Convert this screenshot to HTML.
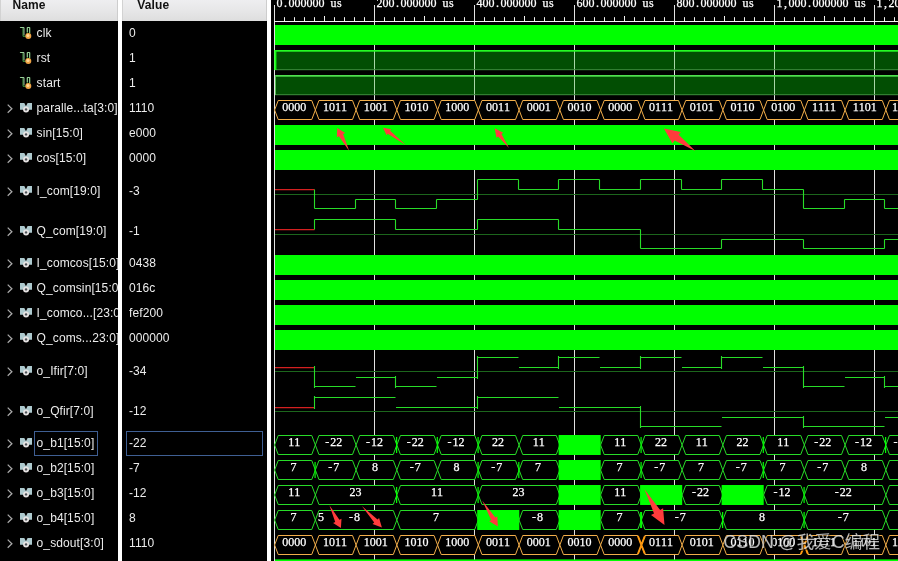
<!DOCTYPE html>
<html><head><meta charset="utf-8"><title>wave</title>
<style>
html,body{margin:0;padding:0;background:#000;}
body{width:898px;height:561px;position:relative;overflow:hidden;font-family:"Liberation Sans",sans-serif;font-size:12px;color:#ececec;letter-spacing:.1px;}
#np{position:absolute;left:0;top:0;width:118px;height:561px;overflow:hidden;will-change:transform;}
#vp{position:absolute;left:122px;top:0;width:145px;height:561px;overflow:hidden;will-change:transform;}
.sep{position:absolute;top:0;height:561px;width:4px;background:#fff;}
.hd{position:absolute;left:0;top:0;right:0;height:20.7px;background:linear-gradient(#eeeef0,#e7e7e8 50%,#dedede);color:#111;font-weight:bold;line-height:13px;}
.hd{box-sizing:border-box;border-left:1px solid #d2d2d2;border-right:1px solid #cdcdcd;}
.hd span{position:absolute;top:-1.2px;}
.nm{position:absolute;left:36.6px;white-space:nowrap;margin-top:1px;}
.vl{position:absolute;left:7px;white-space:nowrap;margin-top:1px;}
.ic{position:absolute;}
.selbox{position:absolute;border:1px solid #3f5f93;box-sizing:border-box;}
#wv{position:absolute;left:0;top:0;will-change:transform;}
.grid{stroke:#e2e2e2;stroke-width:1;}
.rul{stroke:#f4f4f4;stroke-width:1;}
.m{font-family:"Liberation Serif",serif;font-size:12px;fill:#fff;text-anchor:middle;stroke:#fff;stroke-width:.25px;}
.wm{font-family:"Liberation Sans","Noto Sans CJK SC",sans-serif;font-size:17.5px;fill:#e2e2e2;fill-opacity:.8;filter:drop-shadow(1px 1px 0.4px rgba(0,0,0,.75));}
</style></head><body>
<svg width="0" height="0" style="position:absolute"><defs>
<symbol id="chev" viewBox="0 0 28 14" width="28" height="14"><path d="M1.7 3.6 L5.9 7.7 L1.7 11.8" fill="none" stroke="#a9a9a9" stroke-width="1.25"/></symbol>
<symbol id="busic" viewBox="0 0 28 14" width="28" height="14">
<path d="M14 2 H18.3 L19.95 5.2 L21.6 2 H26 V8.8 H14 Z" fill="#adc9ce"/>
<circle cx="20.05" cy="8.4" r="3" fill="#e6e2e2"/><circle cx="20.05" cy="8.4" r="1.2" fill="#4a5056"/></symbol>
<symbol id="sigic" viewBox="0 0 28 14" width="28" height="14">
<path d="M13.9 1.5 H17 V10.3 H21.3 V1.5 H23.7 V8" fill="none" stroke="#3f9a3f" stroke-width="1"/>
<path d="M14.2 1.5 H18 V9.3 M21.3 6 V1.5 H23.7 V7" fill="none" stroke="#a9d6a9" stroke-width=".9"/>
<circle cx="22.3" cy="9.9" r="3" fill="#eea244"/><circle cx="22" cy="9.5" r="1.5" fill="#ffd596"/></symbol>
</defs></svg>
<svg id="wv" width="898" height="561" viewBox="0 0 898 561">
<line x1="274.5" y1="5" x2="274.5" y2="561" class="grid"/>
<line x1="374.5" y1="5" x2="374.5" y2="561" class="grid"/>
<line x1="474.5" y1="5" x2="474.5" y2="561" class="grid"/>
<line x1="574.5" y1="5" x2="574.5" y2="561" class="grid"/>
<line x1="674.5" y1="5" x2="674.5" y2="561" class="grid"/>
<line x1="774.5" y1="5" x2="774.5" y2="561" class="grid"/>
<line x1="874.5" y1="5" x2="874.5" y2="561" class="grid"/>
<line x1="274" y1="21.5" x2="898" y2="21.5" class="rul"/>
<line x1="284.5" y1="17.2" x2="284.5" y2="21" class="rul"/>
<line x1="294.5" y1="17.2" x2="294.5" y2="21" class="rul"/>
<line x1="304.5" y1="17.2" x2="304.5" y2="21" class="rul"/>
<line x1="314.5" y1="17.2" x2="314.5" y2="21" class="rul"/>
<line x1="324.5" y1="16.0" x2="324.5" y2="21" class="rul"/>
<line x1="334.5" y1="17.2" x2="334.5" y2="21" class="rul"/>
<line x1="344.5" y1="17.2" x2="344.5" y2="21" class="rul"/>
<line x1="354.5" y1="17.2" x2="354.5" y2="21" class="rul"/>
<line x1="364.5" y1="17.2" x2="364.5" y2="21" class="rul"/>
<line x1="384.5" y1="17.2" x2="384.5" y2="21" class="rul"/>
<line x1="394.5" y1="17.2" x2="394.5" y2="21" class="rul"/>
<line x1="404.5" y1="17.2" x2="404.5" y2="21" class="rul"/>
<line x1="414.5" y1="17.2" x2="414.5" y2="21" class="rul"/>
<line x1="424.5" y1="16.0" x2="424.5" y2="21" class="rul"/>
<line x1="434.5" y1="17.2" x2="434.5" y2="21" class="rul"/>
<line x1="444.5" y1="17.2" x2="444.5" y2="21" class="rul"/>
<line x1="454.5" y1="17.2" x2="454.5" y2="21" class="rul"/>
<line x1="464.5" y1="17.2" x2="464.5" y2="21" class="rul"/>
<line x1="484.5" y1="17.2" x2="484.5" y2="21" class="rul"/>
<line x1="494.5" y1="17.2" x2="494.5" y2="21" class="rul"/>
<line x1="504.5" y1="17.2" x2="504.5" y2="21" class="rul"/>
<line x1="514.5" y1="17.2" x2="514.5" y2="21" class="rul"/>
<line x1="524.5" y1="16.0" x2="524.5" y2="21" class="rul"/>
<line x1="534.5" y1="17.2" x2="534.5" y2="21" class="rul"/>
<line x1="544.5" y1="17.2" x2="544.5" y2="21" class="rul"/>
<line x1="554.5" y1="17.2" x2="554.5" y2="21" class="rul"/>
<line x1="564.5" y1="17.2" x2="564.5" y2="21" class="rul"/>
<line x1="584.5" y1="17.2" x2="584.5" y2="21" class="rul"/>
<line x1="594.5" y1="17.2" x2="594.5" y2="21" class="rul"/>
<line x1="604.5" y1="17.2" x2="604.5" y2="21" class="rul"/>
<line x1="614.5" y1="17.2" x2="614.5" y2="21" class="rul"/>
<line x1="624.5" y1="16.0" x2="624.5" y2="21" class="rul"/>
<line x1="634.5" y1="17.2" x2="634.5" y2="21" class="rul"/>
<line x1="644.5" y1="17.2" x2="644.5" y2="21" class="rul"/>
<line x1="654.5" y1="17.2" x2="654.5" y2="21" class="rul"/>
<line x1="664.5" y1="17.2" x2="664.5" y2="21" class="rul"/>
<line x1="684.5" y1="17.2" x2="684.5" y2="21" class="rul"/>
<line x1="694.5" y1="17.2" x2="694.5" y2="21" class="rul"/>
<line x1="704.5" y1="17.2" x2="704.5" y2="21" class="rul"/>
<line x1="714.5" y1="17.2" x2="714.5" y2="21" class="rul"/>
<line x1="724.5" y1="16.0" x2="724.5" y2="21" class="rul"/>
<line x1="734.5" y1="17.2" x2="734.5" y2="21" class="rul"/>
<line x1="744.5" y1="17.2" x2="744.5" y2="21" class="rul"/>
<line x1="754.5" y1="17.2" x2="754.5" y2="21" class="rul"/>
<line x1="764.5" y1="17.2" x2="764.5" y2="21" class="rul"/>
<line x1="784.5" y1="17.2" x2="784.5" y2="21" class="rul"/>
<line x1="794.5" y1="17.2" x2="794.5" y2="21" class="rul"/>
<line x1="804.5" y1="17.2" x2="804.5" y2="21" class="rul"/>
<line x1="814.5" y1="17.2" x2="814.5" y2="21" class="rul"/>
<line x1="824.5" y1="16.0" x2="824.5" y2="21" class="rul"/>
<line x1="834.5" y1="17.2" x2="834.5" y2="21" class="rul"/>
<line x1="844.5" y1="17.2" x2="844.5" y2="21" class="rul"/>
<line x1="854.5" y1="17.2" x2="854.5" y2="21" class="rul"/>
<line x1="864.5" y1="17.2" x2="864.5" y2="21" class="rul"/>
<line x1="884.5" y1="17.2" x2="884.5" y2="21" class="rul"/>
<line x1="894.5" y1="17.2" x2="894.5" y2="21" class="rul"/>
<text class="m" x="279.5 285.5 291.5 297.5 303.5 309.5 315.5 321.5 327.5 333.5 339.5" y="6.8">0.000000 us</text>
<text class="m" x="379.5 385.5 391.5 397.5 403.5 409.5 415.5 421.5 427.5 433.5 439.5 445.5 451.5" y="6.8">200.000000 us</text>
<text class="m" x="479.5 485.5 491.5 497.5 503.5 509.5 515.5 521.5 527.5 533.5 539.5 545.5 551.5" y="6.8">400.000000 us</text>
<text class="m" x="579.5 585.5 591.5 597.5 603.5 609.5 615.5 621.5 627.5 633.5 639.5 645.5 651.5" y="6.8">600.000000 us</text>
<text class="m" x="679.5 685.5 691.5 697.5 703.5 709.5 715.5 721.5 727.5 733.5 739.5 745.5 751.5" y="6.8">800.000000 us</text>
<text class="m" x="779.5 785.5 791.5 797.5 803.5 809.5 815.5 821.5 827.5 833.5 839.5 845.5 851.5 857.5 863.5" y="6.8">1,000.000000 us</text>
<text class="m" x="879.5 885.5 891.5 897.5 903.5 909.5 915.5 921.5 927.5 933.5 939.5 945.5 951.5 957.5 963.5" y="6.8">1,200.000000 us</text>
<rect x="275.0" y="25.0" width="623.0" height="20" fill="#00ff00"/>
<rect x="275" y="50" width="623" height="20" fill="#024e03"/>
<line x1="374.5" y1="51" x2="374.5" y2="70" stroke="#a8d6a8" stroke-width="1"/>
<line x1="474.5" y1="51" x2="474.5" y2="70" stroke="#a8d6a8" stroke-width="1"/>
<line x1="574.5" y1="51" x2="574.5" y2="70" stroke="#a8d6a8" stroke-width="1"/>
<line x1="674.5" y1="51" x2="674.5" y2="70" stroke="#a8d6a8" stroke-width="1"/>
<line x1="774.5" y1="51" x2="774.5" y2="70" stroke="#a8d6a8" stroke-width="1"/>
<line x1="874.5" y1="51" x2="874.5" y2="70" stroke="#a8d6a8" stroke-width="1"/>
<rect x="275" y="50.0" width="623" height="1.7" fill="#25fa25"/>
<rect x="275" y="69.2" width="623" height="1" fill="#3d8a3d"/>
<rect x="274.3" y="50" width="2.1" height="20" fill="#10ff10"/>
<rect x="275" y="75" width="623" height="20" fill="#024e03"/>
<line x1="374.5" y1="76" x2="374.5" y2="95" stroke="#a8d6a8" stroke-width="1"/>
<line x1="474.5" y1="76" x2="474.5" y2="95" stroke="#a8d6a8" stroke-width="1"/>
<line x1="574.5" y1="76" x2="574.5" y2="95" stroke="#a8d6a8" stroke-width="1"/>
<line x1="674.5" y1="76" x2="674.5" y2="95" stroke="#a8d6a8" stroke-width="1"/>
<line x1="774.5" y1="76" x2="774.5" y2="95" stroke="#a8d6a8" stroke-width="1"/>
<line x1="874.5" y1="76" x2="874.5" y2="95" stroke="#a8d6a8" stroke-width="1"/>
<rect x="275" y="75.0" width="623" height="1.7" fill="#4fe04f"/>
<rect x="275" y="94.2" width="623" height="1" fill="#3d8a3d"/>
<rect x="275" y="75" width="1" height="20" fill="#55c055"/>
<rect x="275.0" y="125.0" width="623.0" height="20" fill="#00ff00"/>
<rect x="275.0" y="150.0" width="623.0" height="20" fill="#00ff00"/>
<rect x="275.0" y="255.0" width="623.0" height="20" fill="#00ff00"/>
<rect x="275.0" y="280.0" width="623.0" height="20" fill="#00ff00"/>
<rect x="275.0" y="305.0" width="623.0" height="20" fill="#00ff00"/>
<rect x="275.0" y="330.0" width="623.0" height="20" fill="#00ff00"/>
<rect x="275" y="559.4" width="623" height="2" fill="#00ff00"/>
<path d="M274.60 110.00 L278.20 100.50 L311.75 100.50 L315.35 110.00 L311.75 119.50 L278.20 119.50 Z" fill="#000" stroke="#f2ae4a" stroke-width="1"/>
<text class="m" x="285.4 291.4 297.4 303.4" y="111.3">0000</text>
<path d="M315.35 110.00 L318.95 100.50 L352.50 100.50 L356.10 110.00 L352.50 119.50 L318.95 119.50 Z" fill="#000" stroke="#f2ae4a" stroke-width="1"/>
<text class="m" x="326.1 332.1 338.1 344.1" y="111.3">1011</text>
<path d="M356.10 110.00 L359.70 100.50 L393.25 100.50 L396.85 110.00 L393.25 119.50 L359.70 119.50 Z" fill="#000" stroke="#f2ae4a" stroke-width="1"/>
<text class="m" x="366.9 372.9 378.9 384.9" y="111.3">1001</text>
<path d="M396.85 110.00 L400.45 100.50 L434.00 100.50 L437.60 110.00 L434.00 119.50 L400.45 119.50 Z" fill="#000" stroke="#f2ae4a" stroke-width="1"/>
<text class="m" x="407.6 413.6 419.6 425.6" y="111.3">1010</text>
<path d="M437.60 110.00 L441.20 100.50 L474.75 100.50 L478.35 110.00 L474.75 119.50 L441.20 119.50 Z" fill="#000" stroke="#f2ae4a" stroke-width="1"/>
<text class="m" x="448.4 454.4 460.4 466.4" y="111.3">1000</text>
<path d="M478.35 110.00 L481.95 100.50 L515.50 100.50 L519.10 110.00 L515.50 119.50 L481.95 119.50 Z" fill="#000" stroke="#f2ae4a" stroke-width="1"/>
<text class="m" x="489.1 495.1 501.1 507.1" y="111.3">0011</text>
<path d="M519.10 110.00 L522.70 100.50 L556.25 100.50 L559.85 110.00 L556.25 119.50 L522.70 119.50 Z" fill="#000" stroke="#f2ae4a" stroke-width="1"/>
<text class="m" x="529.9 535.9 541.9 547.9" y="111.3">0001</text>
<path d="M559.85 110.00 L563.45 100.50 L597.00 100.50 L600.60 110.00 L597.00 119.50 L563.45 119.50 Z" fill="#000" stroke="#f2ae4a" stroke-width="1"/>
<text class="m" x="570.6 576.6 582.6 588.6" y="111.3">0010</text>
<path d="M600.60 110.00 L604.20 100.50 L637.75 100.50 L641.35 110.00 L637.75 119.50 L604.20 119.50 Z" fill="#000" stroke="#f2ae4a" stroke-width="1"/>
<text class="m" x="611.4 617.4 623.4 629.4" y="111.3">0000</text>
<path d="M641.35 110.00 L644.95 100.50 L678.50 100.50 L682.10 110.00 L678.50 119.50 L644.95 119.50 Z" fill="#000" stroke="#f2ae4a" stroke-width="1"/>
<text class="m" x="652.1 658.1 664.1 670.1" y="111.3">0111</text>
<path d="M682.10 110.00 L685.70 100.50 L719.25 100.50 L722.85 110.00 L719.25 119.50 L685.70 119.50 Z" fill="#000" stroke="#f2ae4a" stroke-width="1"/>
<text class="m" x="692.9 698.9 704.9 710.9" y="111.3">0101</text>
<path d="M722.85 110.00 L726.45 100.50 L760.00 100.50 L763.60 110.00 L760.00 119.50 L726.45 119.50 Z" fill="#000" stroke="#f2ae4a" stroke-width="1"/>
<text class="m" x="733.6 739.6 745.6 751.6" y="111.3">0110</text>
<path d="M763.60 110.00 L767.20 100.50 L800.75 100.50 L804.35 110.00 L800.75 119.50 L767.20 119.50 Z" fill="#000" stroke="#f2ae4a" stroke-width="1"/>
<text class="m" x="774.4 780.4 786.4 792.4" y="111.3">0100</text>
<path d="M804.35 110.00 L807.95 100.50 L841.50 100.50 L845.10 110.00 L841.50 119.50 L807.95 119.50 Z" fill="#000" stroke="#f2ae4a" stroke-width="1"/>
<text class="m" x="815.1 821.1 827.1 833.1" y="111.3">1111</text>
<path d="M845.10 110.00 L848.70 100.50 L882.25 100.50 L885.85 110.00 L882.25 119.50 L848.70 119.50 Z" fill="#000" stroke="#f2ae4a" stroke-width="1"/>
<text class="m" x="855.9 861.9 867.9 873.9" y="111.3">1101</text>
<path d="M900.00 100.50 L889.45 100.50 L885.85 110.00 L889.45 119.50 L900.00 119.50" fill="#000" stroke="#f2ae4a" stroke-width="1"/>
<text class="m" x="895.0" y="111.3">1</text>
<path d="M274.60 445.00 L278.20 435.50 L311.75 435.50 L315.35 445.00 L311.75 454.50 L278.20 454.50 Z" fill="#000" stroke="#28dc28" stroke-width="1"/>
<text class="m" x="291.4 297.4" y="446.3">11</text>
<path d="M315.35 445.00 L318.95 435.50 L352.50 435.50 L356.10 445.00 L352.50 454.50 L318.95 454.50 Z" fill="#000" stroke="#28dc28" stroke-width="1"/>
<text class="m" x="327.3 333.3 339.3" y="446.3">-22</text>
<path d="M356.10 445.00 L359.70 435.50 L393.25 435.50 L396.85 445.00 L393.25 454.50 L359.70 454.50 Z" fill="#000" stroke="#28dc28" stroke-width="1"/>
<text class="m" x="368.1 374.1 380.1" y="446.3">-12</text>
<path d="M396.85 445.00 L400.45 435.50 L434.00 435.50 L437.60 445.00 L434.00 454.50 L400.45 454.50 Z" fill="#000" stroke="#28dc28" stroke-width="1"/>
<text class="m" x="408.8 414.8 420.8" y="446.3">-22</text>
<path d="M437.60 445.00 L441.20 435.50 L474.75 435.50 L478.35 445.00 L474.75 454.50 L441.20 454.50 Z" fill="#000" stroke="#28dc28" stroke-width="1"/>
<text class="m" x="449.6 455.6 461.6" y="446.3">-12</text>
<path d="M478.35 445.00 L481.95 435.50 L515.50 435.50 L519.10 445.00 L515.50 454.50 L481.95 454.50 Z" fill="#000" stroke="#28dc28" stroke-width="1"/>
<text class="m" x="495.1 501.1" y="446.3">22</text>
<path d="M519.10 445.00 L522.70 435.50 L556.25 435.50 L559.85 445.00 L556.25 454.50 L522.70 454.50 Z" fill="#000" stroke="#28dc28" stroke-width="1"/>
<text class="m" x="535.9 541.9" y="446.3">11</text>
<rect x="558.6" y="435" width="42.1" height="20" fill="#00ff00"/>
<path d="M600.60 445.00 L604.20 435.50 L637.75 435.50 L641.35 445.00 L637.75 454.50 L604.20 454.50 Z" fill="#000" stroke="#28dc28" stroke-width="1"/>
<text class="m" x="617.4 623.4" y="446.3">11</text>
<path d="M641.35 445.00 L644.95 435.50 L678.50 435.50 L682.10 445.00 L678.50 454.50 L644.95 454.50 Z" fill="#000" stroke="#28dc28" stroke-width="1"/>
<text class="m" x="658.1 664.1" y="446.3">22</text>
<path d="M682.10 445.00 L685.70 435.50 L719.25 435.50 L722.85 445.00 L719.25 454.50 L685.70 454.50 Z" fill="#000" stroke="#28dc28" stroke-width="1"/>
<text class="m" x="698.9 704.9" y="446.3">11</text>
<path d="M722.85 445.00 L726.45 435.50 L760.00 435.50 L763.60 445.00 L760.00 454.50 L726.45 454.50 Z" fill="#000" stroke="#28dc28" stroke-width="1"/>
<text class="m" x="739.6 745.6" y="446.3">22</text>
<path d="M763.60 445.00 L767.20 435.50 L800.75 435.50 L804.35 445.00 L800.75 454.50 L767.20 454.50 Z" fill="#000" stroke="#28dc28" stroke-width="1"/>
<text class="m" x="780.4 786.4" y="446.3">11</text>
<path d="M804.35 445.00 L807.95 435.50 L841.50 435.50 L845.10 445.00 L841.50 454.50 L807.95 454.50 Z" fill="#000" stroke="#28dc28" stroke-width="1"/>
<text class="m" x="816.3 822.3 828.3" y="446.3">-22</text>
<path d="M845.10 445.00 L848.70 435.50 L882.25 435.50 L885.85 445.00 L882.25 454.50 L848.70 454.50 Z" fill="#000" stroke="#28dc28" stroke-width="1"/>
<text class="m" x="857.1 863.1 869.1" y="446.3">-12</text>
<path d="M900.00 435.50 L889.45 435.50 L885.85 445.00 L889.45 454.50 L900.00 454.50" fill="#000" stroke="#28dc28" stroke-width="1"/>
<text class="m" x="895.5" y="446.3">-</text>
<path d="M274.60 470.00 L278.20 460.50 L311.75 460.50 L315.35 470.00 L311.75 479.50 L278.20 479.50 Z" fill="#000" stroke="#28dc28" stroke-width="1"/>
<text class="m" x="293.5" y="471.3">7</text>
<path d="M315.35 470.00 L318.95 460.50 L352.50 460.50 L356.10 470.00 L352.50 479.50 L318.95 479.50 Z" fill="#000" stroke="#28dc28" stroke-width="1"/>
<text class="m" x="330.3 336.3" y="471.3">-7</text>
<path d="M356.10 470.00 L359.70 460.50 L393.25 460.50 L396.85 470.00 L393.25 479.50 L359.70 479.50 Z" fill="#000" stroke="#28dc28" stroke-width="1"/>
<text class="m" x="375.0" y="471.3">8</text>
<path d="M396.85 470.00 L400.45 460.50 L434.00 460.50 L437.60 470.00 L434.00 479.50 L400.45 479.50 Z" fill="#000" stroke="#28dc28" stroke-width="1"/>
<text class="m" x="411.8 417.8" y="471.3">-7</text>
<path d="M437.60 470.00 L441.20 460.50 L474.75 460.50 L478.35 470.00 L474.75 479.50 L441.20 479.50 Z" fill="#000" stroke="#28dc28" stroke-width="1"/>
<text class="m" x="456.5" y="471.3">8</text>
<path d="M478.35 470.00 L481.95 460.50 L515.50 460.50 L519.10 470.00 L515.50 479.50 L481.95 479.50 Z" fill="#000" stroke="#28dc28" stroke-width="1"/>
<text class="m" x="493.3 499.3" y="471.3">-7</text>
<path d="M519.10 470.00 L522.70 460.50 L556.25 460.50 L559.85 470.00 L556.25 479.50 L522.70 479.50 Z" fill="#000" stroke="#28dc28" stroke-width="1"/>
<text class="m" x="538.0" y="471.3">7</text>
<rect x="558.6" y="460" width="42.1" height="20" fill="#00ff00"/>
<path d="M600.60 470.00 L604.20 460.50 L637.75 460.50 L641.35 470.00 L637.75 479.50 L604.20 479.50 Z" fill="#000" stroke="#28dc28" stroke-width="1"/>
<text class="m" x="619.5" y="471.3">7</text>
<path d="M641.35 470.00 L644.95 460.50 L678.50 460.50 L682.10 470.00 L678.50 479.50 L644.95 479.50 Z" fill="#000" stroke="#28dc28" stroke-width="1"/>
<text class="m" x="656.3 662.3" y="471.3">-7</text>
<path d="M682.10 470.00 L685.70 460.50 L719.25 460.50 L722.85 470.00 L719.25 479.50 L685.70 479.50 Z" fill="#000" stroke="#28dc28" stroke-width="1"/>
<text class="m" x="701.0" y="471.3">7</text>
<path d="M722.85 470.00 L726.45 460.50 L760.00 460.50 L763.60 470.00 L760.00 479.50 L726.45 479.50 Z" fill="#000" stroke="#28dc28" stroke-width="1"/>
<text class="m" x="737.8 743.8" y="471.3">-7</text>
<path d="M763.60 470.00 L767.20 460.50 L800.75 460.50 L804.35 470.00 L800.75 479.50 L767.20 479.50 Z" fill="#000" stroke="#28dc28" stroke-width="1"/>
<text class="m" x="782.5" y="471.3">7</text>
<path d="M804.35 470.00 L807.95 460.50 L841.50 460.50 L845.10 470.00 L841.50 479.50 L807.95 479.50 Z" fill="#000" stroke="#28dc28" stroke-width="1"/>
<text class="m" x="819.3 825.3" y="471.3">-7</text>
<path d="M845.10 470.00 L848.70 460.50 L882.25 460.50 L885.85 470.00 L882.25 479.50 L848.70 479.50 Z" fill="#000" stroke="#28dc28" stroke-width="1"/>
<text class="m" x="864.0" y="471.3">8</text>
<path d="M900.00 460.50 L889.45 460.50 L885.85 470.00 L889.45 479.50 L900.00 479.50" fill="#000" stroke="#28dc28" stroke-width="1"/>
<path d="M274.60 495.00 L278.20 485.50 L311.75 485.50 L315.35 495.00 L311.75 504.50 L278.20 504.50 Z" fill="#000" stroke="#28dc28" stroke-width="1"/>
<text class="m" x="291.4 297.4" y="496.3">11</text>
<path d="M315.35 495.00 L318.95 485.50 L393.25 485.50 L396.85 495.00 L393.25 504.50 L318.95 504.50 Z" fill="#000" stroke="#28dc28" stroke-width="1"/>
<text class="m" x="352.5 358.5" y="496.3">23</text>
<path d="M396.85 495.00 L400.45 485.50 L474.75 485.50 L478.35 495.00 L474.75 504.50 L400.45 504.50 Z" fill="#000" stroke="#28dc28" stroke-width="1"/>
<text class="m" x="434.0 440.0" y="496.3">11</text>
<path d="M478.35 495.00 L481.95 485.50 L556.25 485.50 L559.85 495.00 L556.25 504.50 L481.95 504.50 Z" fill="#000" stroke="#28dc28" stroke-width="1"/>
<text class="m" x="515.5 521.5" y="496.3">23</text>
<rect x="558.6" y="485" width="42.1" height="20" fill="#00ff00"/>
<path d="M600.60 495.00 L604.20 485.50 L637.75 485.50 L641.35 495.00 L637.75 504.50 L604.20 504.50 Z" fill="#000" stroke="#28dc28" stroke-width="1"/>
<text class="m" x="617.4 623.4" y="496.3">11</text>
<rect x="640.1" y="485" width="42.1" height="20" fill="#00ff00"/>
<path d="M682.10 495.00 L685.70 485.50 L719.25 485.50 L722.85 495.00 L719.25 504.50 L685.70 504.50 Z" fill="#000" stroke="#28dc28" stroke-width="1"/>
<text class="m" x="694.1 700.1 706.1" y="496.3">-22</text>
<rect x="721.6" y="485" width="42.1" height="20" fill="#00ff00"/>
<path d="M763.60 495.00 L767.20 485.50 L800.75 485.50 L804.35 495.00 L800.75 504.50 L767.20 504.50 Z" fill="#000" stroke="#28dc28" stroke-width="1"/>
<text class="m" x="775.6 781.6 787.6" y="496.3">-12</text>
<path d="M804.35 495.00 L807.95 485.50 L882.25 485.50 L885.85 495.00 L882.25 504.50 L807.95 504.50 Z" fill="#000" stroke="#28dc28" stroke-width="1"/>
<text class="m" x="836.7 842.7 848.7" y="496.3">-22</text>
<path d="M900.00 485.50 L889.45 485.50 L885.85 495.00 L889.45 504.50 L900.00 504.50" fill="#000" stroke="#28dc28" stroke-width="1"/>
<path d="M274.60 520.00 L278.20 510.50 L311.75 510.50 L315.35 520.00 L311.75 529.50 L278.20 529.50 Z" fill="#000" stroke="#28dc28" stroke-width="1"/>
<text class="m" x="293.5" y="521.3">7</text>
<path d="M315.35 520.00 L318.95 510.50 L393.25 510.50 L396.85 520.00 L393.25 529.50 L318.95 529.50 Z" fill="#000" stroke="#28dc28" stroke-width="1"/>
<text class="m" x="321.0" y="521.3">5</text>
<text class="m" x="351.0 357.0" y="521.3">-8</text>
<path d="M396.85 520.00 L400.45 510.50 L474.75 510.50 L478.35 520.00 L474.75 529.50 L400.45 529.50 Z" fill="#000" stroke="#28dc28" stroke-width="1"/>
<text class="m" x="436.1" y="521.3">7</text>
<rect x="477.2" y="510" width="42.1" height="20" fill="#00ff00"/>
<path d="M519.10 520.00 L522.70 510.50 L556.25 510.50 L559.85 520.00 L556.25 529.50 L522.70 529.50 Z" fill="#000" stroke="#28dc28" stroke-width="1"/>
<text class="m" x="534.1 540.1" y="521.3">-8</text>
<rect x="558.6" y="510" width="42.1" height="20" fill="#00ff00"/>
<path d="M600.60 520.00 L604.20 510.50 L637.75 510.50 L641.35 520.00 L637.75 529.50 L604.20 529.50 Z" fill="#000" stroke="#28dc28" stroke-width="1"/>
<text class="m" x="619.5" y="521.3">7</text>
<path d="M641.35 520.00 L644.95 510.50 L719.25 510.50 L722.85 520.00 L719.25 529.50 L644.95 529.50 Z" fill="#000" stroke="#28dc28" stroke-width="1"/>
<text class="m" x="676.7 682.7" y="521.3">-7</text>
<path d="M722.85 520.00 L726.45 510.50 L800.75 510.50 L804.35 520.00 L800.75 529.50 L726.45 529.50 Z" fill="#000" stroke="#28dc28" stroke-width="1"/>
<text class="m" x="762.1" y="521.3">8</text>
<path d="M804.35 520.00 L807.95 510.50 L882.25 510.50 L885.85 520.00 L882.25 529.50 L807.95 529.50 Z" fill="#000" stroke="#28dc28" stroke-width="1"/>
<text class="m" x="839.7 845.7" y="521.3">-7</text>
<path d="M900.00 510.50 L889.45 510.50 L885.85 520.00 L889.45 529.50 L900.00 529.50" fill="#000" stroke="#28dc28" stroke-width="1"/>
<path d="M274.60 545.00 L278.20 535.50 L311.75 535.50 L315.35 545.00 L311.75 554.50 L278.20 554.50 Z" fill="#000" stroke="#f2ae4a" stroke-width="1"/>
<text class="m" x="285.4 291.4 297.4 303.4" y="546.3">0000</text>
<path d="M315.35 545.00 L318.95 535.50 L352.50 535.50 L356.10 545.00 L352.50 554.50 L318.95 554.50 Z" fill="#000" stroke="#f2ae4a" stroke-width="1"/>
<text class="m" x="326.1 332.1 338.1 344.1" y="546.3">1011</text>
<path d="M356.10 545.00 L359.70 535.50 L393.25 535.50 L396.85 545.00 L393.25 554.50 L359.70 554.50 Z" fill="#000" stroke="#f2ae4a" stroke-width="1"/>
<text class="m" x="366.9 372.9 378.9 384.9" y="546.3">1001</text>
<path d="M396.85 545.00 L400.45 535.50 L434.00 535.50 L437.60 545.00 L434.00 554.50 L400.45 554.50 Z" fill="#000" stroke="#f2ae4a" stroke-width="1"/>
<text class="m" x="407.6 413.6 419.6 425.6" y="546.3">1010</text>
<path d="M437.60 545.00 L441.20 535.50 L474.75 535.50 L478.35 545.00 L474.75 554.50 L441.20 554.50 Z" fill="#000" stroke="#f2ae4a" stroke-width="1"/>
<text class="m" x="448.4 454.4 460.4 466.4" y="546.3">1000</text>
<path d="M478.35 545.00 L481.95 535.50 L515.50 535.50 L519.10 545.00 L515.50 554.50 L481.95 554.50 Z" fill="#000" stroke="#f2ae4a" stroke-width="1"/>
<text class="m" x="489.1 495.1 501.1 507.1" y="546.3">0011</text>
<path d="M519.10 545.00 L522.70 535.50 L556.25 535.50 L559.85 545.00 L556.25 554.50 L522.70 554.50 Z" fill="#000" stroke="#f2ae4a" stroke-width="1"/>
<text class="m" x="529.9 535.9 541.9 547.9" y="546.3">0001</text>
<path d="M559.85 545.00 L563.45 535.50 L597.00 535.50 L600.60 545.00 L597.00 554.50 L563.45 554.50 Z" fill="#000" stroke="#f2ae4a" stroke-width="1"/>
<text class="m" x="570.6 576.6 582.6 588.6" y="546.3">0010</text>
<path d="M600.60 545.00 L604.20 535.50 L637.75 535.50 L641.35 545.00 L637.75 554.50 L604.20 554.50 Z" fill="#000" stroke="#f2ae4a" stroke-width="1"/>
<text class="m" x="611.4 617.4 623.4 629.4" y="546.3">0000</text>
<path d="M641.35 545.00 L644.95 535.50 L678.50 535.50 L682.10 545.00 L678.50 554.50 L644.95 554.50 Z" fill="#000" stroke="#f2ae4a" stroke-width="1"/>
<text class="m" x="652.1 658.1 664.1 670.1" y="546.3">0111</text>
<path d="M682.10 545.00 L685.70 535.50 L719.25 535.50 L722.85 545.00 L719.25 554.50 L685.70 554.50 Z" fill="#000" stroke="#f2ae4a" stroke-width="1"/>
<text class="m" x="692.9 698.9 704.9 710.9" y="546.3">0101</text>
<path d="M722.85 545.00 L726.45 535.50 L760.00 535.50 L763.60 545.00 L760.00 554.50 L726.45 554.50 Z" fill="#000" stroke="#f2ae4a" stroke-width="1"/>
<text class="m" x="733.6 739.6 745.6 751.6" y="546.3">0110</text>
<path d="M763.60 545.00 L767.20 535.50 L800.75 535.50 L804.35 545.00 L800.75 554.50 L767.20 554.50 Z" fill="#000" stroke="#f2ae4a" stroke-width="1"/>
<text class="m" x="774.4 780.4 786.4 792.4" y="546.3">0100</text>
<path d="M804.35 545.00 L807.95 535.50 L841.50 535.50 L845.10 545.00 L841.50 554.50 L807.95 554.50 Z" fill="#000" stroke="#f2ae4a" stroke-width="1"/>
<text class="m" x="815.1 821.1 827.1 833.1" y="546.3">1111</text>
<path d="M845.10 545.00 L848.70 535.50 L882.25 535.50 L885.85 545.00 L882.25 554.50 L848.70 554.50 Z" fill="#000" stroke="#f2ae4a" stroke-width="1"/>
<text class="m" x="855.9 861.9 867.9 873.9" y="546.3">1101</text>
<path d="M900.00 535.50 L889.45 535.50 L885.85 545.00 L889.45 554.50 L900.00 554.50" fill="#000" stroke="#f2ae4a" stroke-width="1"/>
<text class="m" x="895.0" y="546.3">1</text>
<line x1="396.6" y1="437" x2="396.6" y2="453" stroke="#00ff00" stroke-width="1.2"/>
<line x1="437.3" y1="437" x2="437.3" y2="453" stroke="#00ff00" stroke-width="1.2"/>
<line x1="478.1" y1="437" x2="478.1" y2="453" stroke="#00ff00" stroke-width="1.2"/>
<line x1="641.1" y1="437" x2="641.1" y2="453" stroke="#00ff00" stroke-width="1.2"/>
<line x1="763.3" y1="437" x2="763.3" y2="453" stroke="#00ff00" stroke-width="1.2"/>
<line x1="885.6" y1="437" x2="885.6" y2="453" stroke="#00ff00" stroke-width="1.2"/>
<line x1="315.1" y1="462" x2="315.1" y2="478" stroke="#00ff00" stroke-width="1.2"/>
<line x1="478.1" y1="462" x2="478.1" y2="478" stroke="#00ff00" stroke-width="1.2"/>
<line x1="518.8" y1="462" x2="518.8" y2="478" stroke="#00ff00" stroke-width="1.2"/>
<line x1="641.1" y1="462" x2="641.1" y2="478" stroke="#00ff00" stroke-width="1.2"/>
<line x1="763.3" y1="462" x2="763.3" y2="478" stroke="#00ff00" stroke-width="1.2"/>
<line x1="396.6" y1="487" x2="396.6" y2="503" stroke="#00ff00" stroke-width="1.2"/>
<line x1="478.1" y1="487" x2="478.1" y2="503" stroke="#00ff00" stroke-width="1.2"/>
<line x1="804.1" y1="487" x2="804.1" y2="503" stroke="#00ff00" stroke-width="1.2"/>
<line x1="641.1" y1="512" x2="641.1" y2="528" stroke="#00ff00" stroke-width="2.0"/>
<line x1="722.6" y1="512" x2="722.6" y2="528" stroke="#00ff00" stroke-width="1.2"/>
<line x1="804.1" y1="512" x2="804.1" y2="528" stroke="#00ff00" stroke-width="1.2"/>
<path d="M637.9 536 L644.9 554 M644.9 536 L637.9 554" stroke="#ff9a10" stroke-width="2" fill="none"/>
<path d="M800.9 536 L807.9 554 M807.9 536 L800.9 554" stroke="#ff9a10" stroke-width="2" fill="none"/>
<line x1="275" y1="194.5" x2="898" y2="194.5" stroke="#1c661c" stroke-width="1"/>
<path d="M275 189.5 H314.50" stroke="#d42020" stroke-width="1.25" fill="none"/>
<path d="M314.5 189.5 V208.5 M314.5 208.5 H355.5 M355.5 199.5 V208.5 M355.5 199.5 H395.5 M395.5 199.5 V208.5 M395.5 208.5 H436.5 M436.5 199.5 V208.5 M436.5 199.5 H477.5 M477.5 179.5 V199.5 M477.5 179.5 H518.5 M518.5 179.5 V189.5 M518.5 189.5 H558.5 M558.5 179.5 V189.5 M558.5 179.5 H599.5 M599.5 179.5 V189.5 M599.5 189.5 H640.5 M640.5 179.5 V189.5 M640.5 179.5 H681.5 M681.5 179.5 V189.5 M681.5 189.5 H721.5 M721.5 179.5 V189.5 M721.5 179.5 H762.5 M762.5 179.5 V189.5 M762.5 189.5 H803.5 M803.5 189.5 V208.5 M803.5 208.5 H844.5 M844.5 199.5 V208.5 M844.5 199.5 H884.5 M884.5 199.5 V208.5 M884.5 208.5 H900.0" stroke="#28dc28" stroke-width="1.1" fill="none"/>
<line x1="275" y1="234.5" x2="898" y2="234.5" stroke="#1c661c" stroke-width="1"/>
<path d="M275 229.5 H314.50" stroke="#d42020" stroke-width="1.25" fill="none"/>
<path d="M314.5 219.5 V229.5 M314.5 219.5 H395.5 M395.5 219.5 V229.5 M395.5 229.5 H477.5 M477.5 219.5 V229.5 M477.5 219.5 H558.5 M558.5 219.5 V229.5 M558.5 229.5 H640.5 M640.5 229.5 V248.5 M640.5 248.5 H721.5 M721.5 239.5 V248.5 M721.5 239.5 H803.5 M803.5 239.5 V248.5 M803.5 248.5 H884.5 M884.5 239.5 V248.5 M884.5 239.5 H900.0" stroke="#28dc28" stroke-width="1.1" fill="none"/>
<line x1="275" y1="371.5" x2="898" y2="371.5" stroke="#1c661c" stroke-width="1"/>
<path d="M275 367.5 H314.50" stroke="#d42020" stroke-width="1.25" fill="none"/>
<path d="M314.5 365.9 V388.1 M314.5 386.5 H355.5 M356.0 377.5 H395.5 M395.5 375.9 V388.1 M395.5 386.5 H436.5 M437.0 377.5 H477.5 M477.5 355.9 V379.1 M477.5 357.5 H518.5 M519.0 367.5 H558.5 M558.5 355.9 V369.1 M558.5 357.5 H599.5 M600.0 367.5 H640.5 M640.5 355.9 V369.1 M640.5 357.5 H681.5 M682.0 367.5 H721.5 M721.5 355.9 V369.1 M721.5 357.5 H762.5 M763.0 367.5 H803.5 M803.5 365.9 V388.1 M803.5 386.5 H844.5 M845.0 377.5 H884.5 M884.5 375.9 V388.1 M884.5 386.5 H900.0" stroke="#28dc28" stroke-width="1.1" fill="none"/>
<line x1="275" y1="411.5" x2="898" y2="411.5" stroke="#1c661c" stroke-width="1"/>
<path d="M275 407.5 H314.50" stroke="#d42020" stroke-width="1.25" fill="none"/>
<path d="M314.5 395.9 V409.1 M314.5 397.5 H395.5 M396.0 407.5 H477.5 M477.5 395.9 V409.1 M477.5 397.5 H558.5 M559.0 407.5 H640.5 M640.5 405.9 V428.1 M640.5 426.5 H721.5 M722.0 417.5 H803.5 M803.5 415.9 V428.1 M803.5 426.5 H884.5 M885.0 417.5 H900.0" stroke="#28dc28" stroke-width="1.1" fill="none"/>
<polygon points="349.2,150.9 343.1,134.0 345.2,132.9 337.3,128.0 336.8,137.3 338.9,136.2" fill="#ff3c3c"/>
<polygon points="405.7,145.0 390.1,130.7 391.2,129.2 383.0,127.8 386.6,135.3 387.7,133.8" fill="#ff3c3c"/>
<polygon points="509.0,148.0 501.5,134.0 503.2,132.8 494.7,128.2 496.4,137.7 498.1,136.5" fill="#ff3c3c"/>
<polygon points="695.3,151.1 678.7,134.8 680.8,131.9 663.9,128.5 672.5,143.4 674.6,140.6" fill="#ff3c3c"/>
<polygon points="329.4,505.2 335.2,521.9 333.1,523.0 340.9,528.0 341.5,518.7 339.4,519.8" fill="#ff3c3c"/>
<polygon points="361.9,506.1 374.2,522.6 372.5,524.1 381.9,527.5 379.1,517.9 377.5,519.4" fill="#ff3c3c"/>
<polygon points="482.2,500.4 491.2,520.0 489.2,521.2 497.9,526.5 497.3,516.3 495.3,517.6" fill="#ff3c3c"/>
<polygon points="644.5,489.3 654.0,513.4 651.0,515.1 664.5,524.9 663.1,508.2 660.1,509.9" fill="#ff3c3c"/>
<text class="wm" x="723.6" y="548" textLength="156.4" lengthAdjust="spacing">CSDN @我爱C编程</text>
</svg>
<div id="np">
<div class="hd"><span style="left:11.4px">Name</span></div>
<svg class="ic" style="left:6px;top:26.0px" width="28" height="14" viewBox="0 0 28 14"><use href="#sigic"/></svg><div class="nm" style="top:20px;height:25px;line-height:25px">clk</div>
<svg class="ic" style="left:6px;top:51.0px" width="28" height="14" viewBox="0 0 28 14"><use href="#sigic"/></svg><div class="nm" style="top:45px;height:25px;line-height:25px">rst</div>
<svg class="ic" style="left:6px;top:76.0px" width="28" height="14" viewBox="0 0 28 14"><use href="#sigic"/></svg><div class="nm" style="top:70px;height:25px;line-height:25px">start</div>
<svg class="ic" style="left:6px;top:101.0px" width="28" height="14" viewBox="0 0 28 14"><use href="#chev"/><use href="#busic"/></svg><div class="nm" style="top:95px;height:25px;line-height:25px">paralle...ta[3:0]</div>
<svg class="ic" style="left:6px;top:126.0px" width="28" height="14" viewBox="0 0 28 14"><use href="#chev"/><use href="#busic"/></svg><div class="nm" style="top:120px;height:25px;line-height:25px">sin[15:0]</div>
<svg class="ic" style="left:6px;top:151.0px" width="28" height="14" viewBox="0 0 28 14"><use href="#chev"/><use href="#busic"/></svg><div class="nm" style="top:145px;height:25px;line-height:25px">cos[15:0]</div>
<svg class="ic" style="left:6px;top:183.5px" width="28" height="14" viewBox="0 0 28 14"><use href="#chev"/><use href="#busic"/></svg><div class="nm" style="top:170px;height:40px;line-height:40px">I_com[19:0]</div>
<svg class="ic" style="left:6px;top:223.5px" width="28" height="14" viewBox="0 0 28 14"><use href="#chev"/><use href="#busic"/></svg><div class="nm" style="top:210px;height:40px;line-height:40px">Q_com[19:0]</div>
<svg class="ic" style="left:6px;top:256.0px" width="28" height="14" viewBox="0 0 28 14"><use href="#chev"/><use href="#busic"/></svg><div class="nm" style="top:250px;height:25px;line-height:25px">I_comcos[15:0]</div>
<svg class="ic" style="left:6px;top:281.0px" width="28" height="14" viewBox="0 0 28 14"><use href="#chev"/><use href="#busic"/></svg><div class="nm" style="top:275px;height:25px;line-height:25px">Q_comsin[15:0]</div>
<svg class="ic" style="left:6px;top:306.0px" width="28" height="14" viewBox="0 0 28 14"><use href="#chev"/><use href="#busic"/></svg><div class="nm" style="top:300px;height:25px;line-height:25px">I_comco...[23:0]</div>
<svg class="ic" style="left:6px;top:331.0px" width="28" height="14" viewBox="0 0 28 14"><use href="#chev"/><use href="#busic"/></svg><div class="nm" style="top:325px;height:25px;line-height:25px">Q_coms...23:0]</div>
<svg class="ic" style="left:6px;top:363.5px" width="28" height="14" viewBox="0 0 28 14"><use href="#chev"/><use href="#busic"/></svg><div class="nm" style="top:350px;height:40px;line-height:40px">o_Ifir[7:0]</div>
<svg class="ic" style="left:6px;top:403.5px" width="28" height="14" viewBox="0 0 28 14"><use href="#chev"/><use href="#busic"/></svg><div class="nm" style="top:390px;height:40px;line-height:40px">o_Qfir[7:0]</div>
<svg class="ic" style="left:6px;top:436.0px" width="28" height="14" viewBox="0 0 28 14"><use href="#chev"/><use href="#busic"/></svg><div class="nm" style="top:430px;height:25px;line-height:25px">o_b1[15:0]</div>
<svg class="ic" style="left:6px;top:461.0px" width="28" height="14" viewBox="0 0 28 14"><use href="#chev"/><use href="#busic"/></svg><div class="nm" style="top:455px;height:25px;line-height:25px">o_b2[15:0]</div>
<svg class="ic" style="left:6px;top:486.0px" width="28" height="14" viewBox="0 0 28 14"><use href="#chev"/><use href="#busic"/></svg><div class="nm" style="top:480px;height:25px;line-height:25px">o_b3[15:0]</div>
<svg class="ic" style="left:6px;top:511.0px" width="28" height="14" viewBox="0 0 28 14"><use href="#chev"/><use href="#busic"/></svg><div class="nm" style="top:505px;height:25px;line-height:25px">o_b4[15:0]</div>
<svg class="ic" style="left:6px;top:536.0px" width="28" height="14" viewBox="0 0 28 14"><use href="#chev"/><use href="#busic"/></svg><div class="nm" style="top:530px;height:25px;line-height:25px">o_sdout[3:0]</div>
<div class="selbox" style="left:34px;top:431px;width:64px;height:25px"></div>
</div>
<div class="sep" style="left:118px"></div>
<div id="vp">
<div class="hd"><span style="left:14.3px">Value</span></div>
<div class="vl" style="top:20px;height:25px;line-height:25px">0</div>
<div class="vl" style="top:45px;height:25px;line-height:25px">1</div>
<div class="vl" style="top:70px;height:25px;line-height:25px">1</div>
<div class="vl" style="top:95px;height:25px;line-height:25px">1110</div>
<div class="vl" style="top:120px;height:25px;line-height:25px">e000</div>
<div class="vl" style="top:145px;height:25px;line-height:25px">0000</div>
<div class="vl" style="top:170px;height:40px;line-height:40px">-3</div>
<div class="vl" style="top:210px;height:40px;line-height:40px">-1</div>
<div class="vl" style="top:250px;height:25px;line-height:25px">0438</div>
<div class="vl" style="top:275px;height:25px;line-height:25px">016c</div>
<div class="vl" style="top:300px;height:25px;line-height:25px">fef200</div>
<div class="vl" style="top:325px;height:25px;line-height:25px">000000</div>
<div class="vl" style="top:350px;height:40px;line-height:40px">-34</div>
<div class="vl" style="top:390px;height:40px;line-height:40px">-12</div>
<div class="vl" style="top:430px;height:25px;line-height:25px">-22</div>
<div class="vl" style="top:455px;height:25px;line-height:25px">-7</div>
<div class="vl" style="top:480px;height:25px;line-height:25px">-12</div>
<div class="vl" style="top:505px;height:25px;line-height:25px">8</div>
<div class="vl" style="top:530px;height:25px;line-height:25px">1110</div>
<div class="selbox" style="left:4px;top:431px;width:137px;height:25px"></div>
</div>
<div class="sep" style="left:267px"></div>
</body></html>
